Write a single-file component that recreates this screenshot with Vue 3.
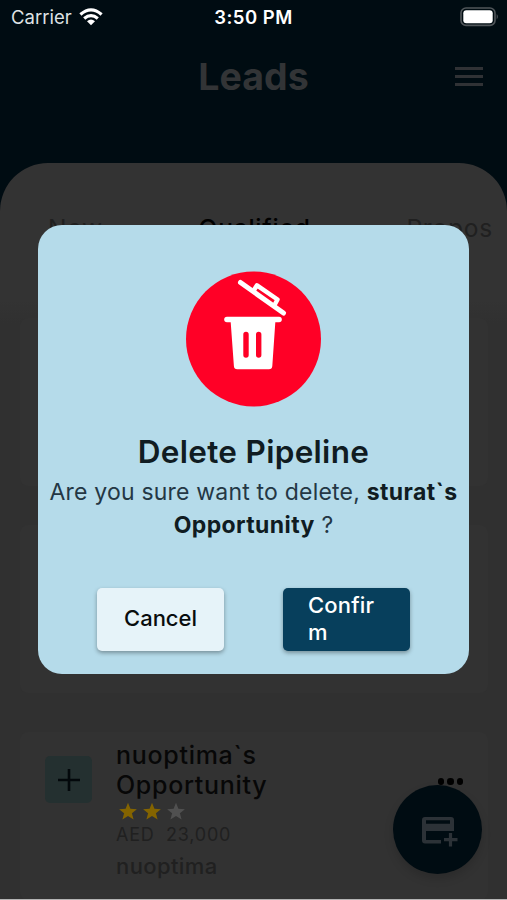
<template>
  <main>
    <div class="status">
      <div class="carrier">
        <span>Carrier</span>
        <svg width="24" height="18" viewBox="0 0 24 18">
          <path d="M1.4 6.5 Q12 -2.8 22.6 6.5" />
          <path d="M5.2 10.5 Q12 4.6 18.8 10.5" />
          <path class="dot" d="M8 13.2 Q12 10 16 13.2 L12 17.2 Z" />
        </svg>
      </div>
      <span class="time">3:50 PM</span>
      <svg class="battery" width="39" height="20" viewBox="0 0 39 20">
        <rect x="1" y="1" width="34" height="17.4" rx="5" fill="none" stroke="#50565a" stroke-width="1.6" />
        <rect x="3.3" y="3.2" width="29.4" height="13" rx="3" fill="#fff" />
        <path d="M36.7 7 Q39 9.7 36.7 12.4 Z" fill="#50565a" />
      </svg>
    </div>

    <header>
      <h1>Leads</h1>
      <div class="menu"><i></i><i></i><i></i></div>
    </header>

    <section class="panel">
      <nav>
        <span v-for="tab in tabs" :key="tab" :class="{ active: tab === activeTab }" @click="activeTab = tab">{{ tab }}</span>
      </nav>
      <div class="leads">
        <div class="card"></div>
        <div class="card"></div>
        <div class="card">
          <div class="add">
            <svg width="24" height="24" viewBox="0 0 24 24"><path d="M12 1v22M1 12h22" stroke="#03080b" stroke-width="2.6" /></svg>
          </div>
          <div class="info">
            <h3>{{ lead.name }}<br>Opportunity</h3>
            <div class="stars">
              <svg v-for="n in 3" :key="n" width="24" height="20" viewBox="0 0 24 20">
                <path :fill="n <= lead.stars ? '#846400' : '#505050'" d="M12 .8l2.4 6 6.5.4-5 4.1 1.7 6.3-5.6-3.5-5.6 3.5 1.7-6.3-5-4.1 6.5-.4z" />
              </svg>
            </div>
            <p class="price">AED&nbsp; {{ lead.price }}</p>
            <p class="company">{{ lead.company }}</p>
          </div>
          <div class="more"><i></i><i></i><i></i></div>
        </div>
      </div>
    </section>

    <div class="fab">
      <svg width="36" height="31" viewBox="0 0 36 31">
        <path fill="#2c3237" fill-rule="evenodd" d="M3 0h26q3 0 3 3v11H4v9h15v3.5H3q-3 0-3-3V3q0-3 3-3zM4 3.3v3.4h24V3.3z" />
        <path d="M28.5 16v13.5M22 22.7h13.5" stroke="#2c3237" stroke-width="3.2" />
      </svg>
    </div>

    <div v-if="showDialog" class="overlay">
      <div class="dialog">
        <svg class="trash" width="136" height="136" viewBox="0 0 136 136">
          <circle cx="67.5" cy="68" r="67.5" fill="#ff0026" />
          <g fill="none" stroke="#fff" stroke-linecap="round" stroke-linejoin="round">
            <path d="M54.5 11.5 L97.5 42" stroke-width="5" />
            <path d="M68 19 L71 14.3 L91.5 28.5 L88.5 34" stroke-width="4.5" />
            <path d="M41 48.5 H93" stroke-width="5.6" />
          </g>
          <path fill="#fff" d="M44.5 48.5h45l-3.2 46.5q-.2 3.2-3.4 3.2H51.3q-3.2 0-3.4-3.2z" />
          <path d="M60 63.5V84M72.7 63.5V84" stroke="#ff0026" stroke-width="5.4" stroke-linecap="round" />
        </svg>
        <h2>Delete Pipeline</h2>
        <p class="message">Are you sure want to delete, <b>sturat`s<br>Opportunity</b> ?</p>
        <div class="actions">
          <button class="cancel" @click="showDialog = false">Cancel</button>
          <button class="confirm" @click="showDialog = false">Confirm</button>
        </div>
      </div>
    </div>
  </main>
</template>

<script setup>
  import {ref} from 'vue'

  const showDialog = ref(true)
  const tabs = ["New", "Qualified", "Propos"]
  const activeTab = ref("Qualified")
  const lead = ref({
    name: "nuoptima`s",
    stars: 2,
    price: "23,000",
    company: "nuoptima"
  })
</script>

<style>
  body{
    margin: 0;
    background-color: #000c12;
  }
</style>

<style scoped>
  *{
    box-sizing: border-box;
  }
  main{
    position: relative;
    width: 507px;
    height: 900px;
    overflow: hidden;
    display: flex;
    flex-direction: column;
    font-family: Inter, "Liberation Sans", sans-serif;
    background-color: #000c12;
    border-bottom: 1px solid #b4b4b4;
  }
  h1, h2, h3, p{
    margin: 0;
    white-space: nowrap;
  }
  .status{
    height: 35px;
    flex: none;
    display: grid;
    grid-template-columns: 1fr auto 1fr;
    align-items: center;
    padding: 0 8px 2px 11px;
    color: #fff;
  }
  .carrier{
    display: flex;
    align-items: center;
    gap: 7px;
    font-size: 18.5px;
    color: #dfe3e5;
  }
  .carrier path{
    fill: none;
    stroke: #fff;
    stroke-width: 3.2;
  }
  .carrier .dot{
    fill: #fff;
    stroke: none;
  }
  .time{
    font-size: 18.5px;
    font-weight: 600;
    letter-spacing: 0.5px;
    margin-left: -3px;
  }
  .battery{
    justify-self: end;
  }
  header{
    height: 128px;
    flex: none;
    display: grid;
    grid-template-columns: 1fr auto 1fr;
    padding: 18px 24px 0;
    color: #323436;
  }
  h1{
    grid-column: 2;
    font-size: 37.5px;
    line-height: 48px;
    font-weight: 700;
  }
  .menu{
    justify-self: end;
    display: flex;
    flex-direction: column;
    gap: 5px;
    padding-top: 14px;
  }
  .menu i{
    width: 28px;
    height: 3px;
    background-color: #303235;
  }
  .panel{
    flex: 1;
    display: flex;
    flex-direction: column;
    background-color: #333;
    border-radius: 48px 48px 0 0;
  }
  nav{
    height: 137px;
    flex: none;
    display: flex;
    justify-content: space-between;
    padding: 50px 14px 0 48px;
    font-size: 24.5px;
    line-height: 30px;
    letter-spacing: 0.8px;
    color: #202020;
  }
  nav .active{
    color: #000;
    font-weight: 500;
  }
  .leads{
    flex: 1;
    display: flex;
    flex-direction: column;
    gap: 39px;
    padding: 18px 19px 0 20px;
    background: linear-gradient(#333, #303030 24px);
  }
  .card{
    height: 168px;
    flex: none;
    display: flex;
    background-color: #323232;
    border-radius: 8px;
    padding: 8px 25px;
  }
  .add{
    width: 47px;
    height: 47px;
    margin-top: 16px;
    display: grid;
    place-items: center;
    background-color: #243030;
    border-radius: 5px;
  }
  .info{
    margin-left: 24px;
    flex: 1;
  }
  h3{
    font-size: 25px;
    font-weight: 500;
    line-height: 30px;
    letter-spacing: 0.7px;
    color: #070707;
  }
  .stars{
    display: flex;
    height: 20px;
    margin-top: 2px;
  }
  .price{
    font-size: 18px;
    line-height: 24px;
    letter-spacing: 0.75px;
    margin-top: 1px;
    color: #202020;
  }
  .company{
    font-size: 22px;
    font-weight: 500;
    line-height: 30px;
    letter-spacing: 0.4px;
    margin-top: 4px;
    color: #202020;
  }
  .more{
    flex: none;
    display: flex;
    gap: 3px;
    padding-top: 38px;
  }
  .more i{
    width: 6.5px;
    height: 6.5px;
    border-radius: 50%;
    background-color: #000;
  }
  .fab{
    position: absolute;
    left: 393px;
    top: 785px;
    width: 89px;
    height: 89px;
    border-radius: 50%;
    display: grid;
    place-items: center;
    padding: 5px 0 0 4px;
    background-color: #000c12;
    box-shadow: 0 5px 10px rgba(0,0,0,0.15);
  }
  .overlay{
    position: absolute;
    inset: 0;
    display: grid;
    place-items: center;
  }
  .dialog{
    width: 431px;
    height: 449px;
    display: flex;
    flex-direction: column;
    align-items: center;
    padding-top: 46px;
    background-color: #b5dbea;
    border-radius: 24px;
    color: #101c22;
  }
  h2{
    margin-top: 25px;
    font-size: 31.5px;
    line-height: 40px;
    font-weight: 600;
    letter-spacing: 0.3px;
  }
  .message{
    margin-top: 4px;
    font-size: 23px;
    line-height: 33px;
    letter-spacing: 0.2px;
    text-align: center;
    color: #243744;
  }
  .message b{
    color: #101c22;
    font-weight: 700;
    letter-spacing: 0.4px;
  }
  .actions{
    width: 100%;
    display: flex;
    gap: 59px;
    padding-left: 59px;
    margin-top: 46px;
  }
  button{
    width: 127px;
    height: 63px;
    border: 0;
    border-radius: 5px;
    padding: 0 25px 2px;
    font-family: inherit;
    font-size: 22px;
    font-weight: 500;
    line-height: 27px;
    text-align: left;
    box-shadow: 0 2px 4px rgba(0,0,0,0.35);
  }
  .cancel{
    padding-left: 27px;
    background-color: #e6f3f9;
    color: #080c0e;
  }
  .confirm{
    background-color: #073f5c;
    color: #fff;
    letter-spacing: 0.2px;
    word-break: break-all;
  }
</style>
